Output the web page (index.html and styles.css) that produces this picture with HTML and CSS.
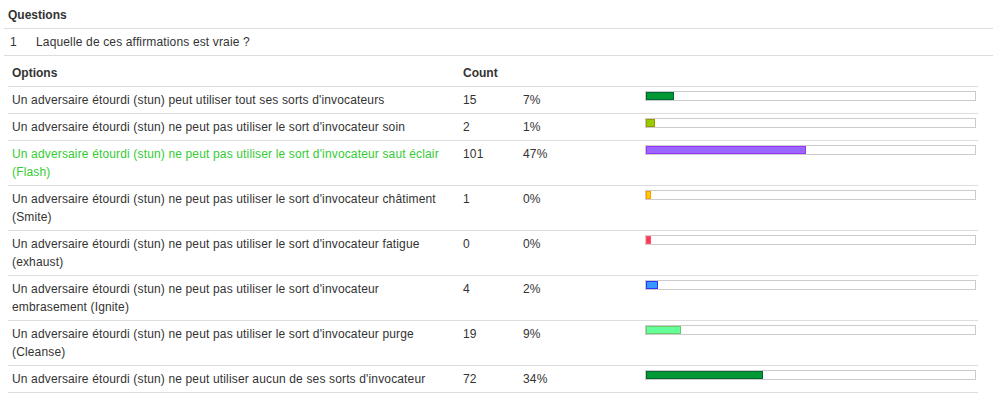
FILE: index.html
```html
<!DOCTYPE html>
<html lang="fr">
<head>
<meta charset="utf-8">
<title>Questions</title>
<link rel="stylesheet" href="styles.css">
</head>
<body>
<div class="survey">
  <div class="sec-head">Questions</div>
  <div class="q-row"><span class="q-num">1</span><span class="q-text">Laquelle de ces affirmations est vraie ?</span></div>
  <div class="opts-wrap">
    <table class="opts">
      <colgroup>
        <col class="c-opt"><col class="c-count"><col class="c-pct"><col class="c-bar">
      </colgroup>
      <thead>
        <tr><th>Options</th><th>Count</th><th></th><th></th></tr>
      </thead>
      <tbody>
        <tr>
          <td>Un adversaire étourdi (stun) peut utiliser tout ses sorts d'invocateurs</td>
          <td>15</td><td>7%</td>
          <td><div class="bar"><div class="fill f-green" style="width:28px"></div></div></td>
        </tr>
        <tr>
          <td>Un adversaire étourdi (stun) ne peut pas utiliser le sort d'invocateur soin</td>
          <td>2</td><td>1%</td>
          <td><div class="bar"><div class="fill f-olive" style="width:9px"></div></div></td>
        </tr>
        <tr class="correct">
          <td>Un adversaire étourdi (stun) ne peut pas utiliser le sort d'invocateur saut éclair (Flash)</td>
          <td>101</td><td>47%</td>
          <td><div class="bar"><div class="fill f-purple" style="width:160px"></div></div></td>
        </tr>
        <tr>
          <td>Un adversaire étourdi (stun) ne peut pas utiliser le sort d'invocateur châtiment (Smite)</td>
          <td>1</td><td>0%</td>
          <td><div class="bar"><div class="fill f-orange" style="width:5px"></div></div></td>
        </tr>
        <tr>
          <td>Un adversaire étourdi (stun) ne peut pas utiliser le sort d'invocateur fatigue (exhaust)</td>
          <td>0</td><td>0%</td>
          <td><div class="bar"><div class="fill f-red" style="width:5px"></div></div></td>
        </tr>
        <tr>
          <td>Un adversaire étourdi (stun) ne peut pas utiliser le sort d'invocateur embrasement (Ignite)</td>
          <td>4</td><td>2%</td>
          <td><div class="bar"><div class="fill f-blue" style="width:12px"></div></div></td>
        </tr>
        <tr>
          <td>Un adversaire étourdi (stun) ne peut pas utiliser le sort d'invocateur purge (Cleanse)</td>
          <td>19</td><td>9%</td>
          <td><div class="bar"><div class="fill f-mint" style="width:35px"></div></div></td>
        </tr>
        <tr>
          <td>Un adversaire étourdi (stun) ne peut utiliser aucun de ses sorts d'invocateur</td>
          <td>72</td><td>34%</td>
          <td><div class="bar"><div class="fill f-green" style="width:117px"></div></div></td>
        </tr>
      </tbody>
    </table>
  </div>
</div>
</body>
</html>
```

FILE: styles.css
```css
html, body {
  margin: 0;
  padding: 0;
  background: #ffffff;
}

body {
  font-family: "Liberation Sans", Arial, sans-serif;
  font-size: 12px;
  line-height: 18px;
  letter-spacing: 0.15px;
  color: #333333;
}

.survey {
  margin-left: 4px;
}

.sec-head {
  padding: 6px 4px 4px 4px;
  font-weight: bold;
  letter-spacing: 0;
  border-bottom: 1px solid #dddddd;
}

.q-row {
  display: flex;
  padding: 4px 6px;
  border-bottom: 1px solid #dddddd;
}

.q-num {
  width: 26px;
}

.opts-wrap {
  padding-left: 4px;
}

.opts {
  width: 970px;
  table-layout: fixed;
  border-collapse: separate;
  border-spacing: 0;
}

.c-opt { width: 451px; }
.c-count { width: 60px; }
.c-pct { width: 122px; }
.c-bar { width: 337px; }

.opts th {
  padding: 8px 4px 4px 4px;
  text-align: left;
  font-weight: bold;
  letter-spacing: 0;
  border-bottom: 1px solid #dddddd;
}

.opts td {
  padding: 4px;
  vertical-align: top;
  text-align: left;
  border-bottom: 1px solid #dddddd;
}

.correct td:first-child {
  color: #33cc33;
}

.bar {
  width: 329px;
  height: 8px;
  border: 1px solid #cccccc;
  background: #ffffff;
}

.fill {
  box-sizing: border-box;
  height: 8px;
  border: 1px solid;
}

.f-green { background: #009933; border-color: #006633; }
.f-olive { background: #99cc00; border-color: #999900; }
.f-purple { background: #9966ff; border-color: #9933ff; }
.f-orange { background: #ffcc00; border-color: #ff9900; }
.f-red { background: #ff3355; border-color: #ff5566; }
.f-blue { background: #3399ff; border-color: #3333ff; }
.f-mint { background: #66ff99; border-color: #66cc66; }
```
